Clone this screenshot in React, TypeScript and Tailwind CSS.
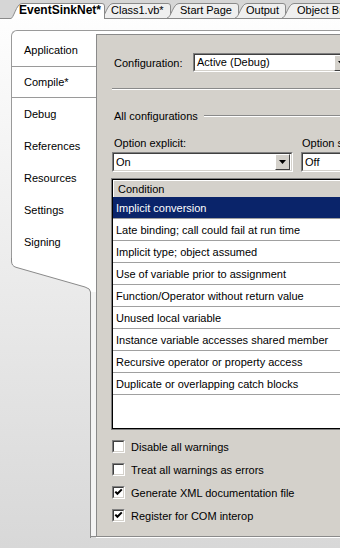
import React from "react";

const conditions = [
  "Implicit conversion",
  "Late binding; call could fail at run time",
  "Implicit type; object assumed",
  "Use of variable prior to assignment",
  "Function/Operator without return value",
  "Unused local variable",
  "Instance variable accesses shared member",
  "Recursive operator or property access",
  "Duplicate or overlapping catch blocks",
];

const pages = ["Application", "Compile*", "Debug", "References", "Resources", "Settings", "Signing"];

const options = [
  { label: "Disable all warnings", checked: false },
  { label: "Treat all warnings as errors", checked: false },
  { label: "Generate XML documentation file", checked: true },
  { label: "Register for COM interop", checked: true },
];

function DocTab({
  label,
  w,
  className,
  active,
}: {
  label: string;
  w: number;
  className: string;
  active?: boolean;
}) {
  const h = active ? 16 : 15;
  return (
    <div
      className={`relative shrink-0 whitespace-nowrap ${active ? "z-10 -mb-px h-[16px] font-bold text-[12px]" : "h-[15px]"} ${className}`}
    >
      <svg className="absolute left-0 top-0" width={w} height={h}>
        <path
          d={`M0,${h} C4,${h} 6,0.5 12,0.5 L${w - 3},0.5 Q${w - 0.5},0.5 ${w - 0.5},3 L${w - 0.5},${h}`}
          fill={active ? "#ffffff" : "#efefef"}
          stroke="#8a8a8a"
        />
      </svg>
      <span className="relative leading-[15px]">{label}</span>
    </div>
  );
}

function DropArrow() {
  return (
    <div className="mr-px flex h-[16px] w-[15px] shrink-0 items-center justify-center border border-t-white border-l-white border-b-[#404040] border-r-[#404040] bg-[#d4d1cb]">
      <svg width="7" height="4" viewBox="0 0 7 4">
        <polygon points="0,0 7,0 3.5,4" fill="#000" />
      </svg>
    </div>
  );
}

function Combo({ value, className }: { value: string; className: string }) {
  return (
    <div className={`flex shrink-0 border border-t-[#808080] border-l-[#808080] border-b-white border-r-white ${className}`}>
      <div className="flex flex-1 items-center border border-t-[#404040] border-l-[#404040] border-b-[#d4d1cb] border-r-[#d4d1cb] bg-white pl-[2px]">
        <span className="flex-1">{value}</span>
        <DropArrow />
      </div>
    </div>
  );
}

function CheckBox({ checked }: { checked: boolean }) {
  return (
    <div className="h-[13px] w-[13px] shrink-0 border border-t-[#808080] border-l-[#808080] border-b-white border-r-white">
      <div className="h-full w-full border border-t-[#404040] border-l-[#404040] border-b-[#d4d1cb] border-r-[#d4d1cb] bg-white">
        {checked && (
          <svg width="9" height="9" viewBox="0 0 9 9" className="block">
            <path d="M1.3 3.6 L3.4 5.8 L7.8 1.4" fill="none" stroke="#000" strokeWidth="2" />
          </svg>
        )}
      </div>
    </div>
  );
}

function Etched({ className }: { className: string }) {
  return <div className={`h-[2px] border-t border-b border-t-[#8a8a8a] border-b-white ${className}`} />;
}

export default function App() {
  return (
    <div className="flex h-[548px] w-[340px] flex-col overflow-hidden bg-linear-to-b from-white to-[#d8d8d8] text-[11px] leading-[13px] text-black [font-family:'Liberation_Sans',Arial,sans-serif]">
      {/* document tabs */}
      <div className="flex h-[19px] shrink-0 items-end border-b border-[#8a8a8a] bg-[#d6d6d6] pl-[10px]">
        <DocTab label="EventSinkNet*" w={95} className="w-[95px] pl-[9px]" active />
        <DocTab label="Class1.vb*" w={70} className="-ml-[4px] w-[70px] pl-[10px]" />
        <DocTab label="Start Page" w={72} className="-ml-[4px] w-[72px] pl-[13px]" />
        <DocTab label="Output" w={51} className="-ml-[4px] w-[51px] pl-[11px]" />
        <DocTab label="Object Browser" w={90} className="-ml-[4px] w-[90px] pl-[15px]" />
      </div>

      <div className="mt-[11px] flex h-[508px] shrink-0 pl-[11px]">
        {/* property page list */}
        <div className="flex w-[85px] shrink-0 flex-col">
          <div className="rounded-tl-[6px] border-l border-t border-[#9a9a9a] bg-white pt-[3px]">
            {pages.map((p) => (
              <div
                key={p}
                className={`flex h-[32px] items-center pl-[12px] pt-px ${p === "Compile*" ? "border-y border-[#9a9a9a]" : ""}`}
              >
                {p}
              </div>
            ))}
          </div>
          <svg width="85" height="34" className="block shrink-0">
            <path d="M0,0 L0.5,3 Q0.5,8 5,9.3 L74,29 Q79.5,30.5 79.5,34 L85,34 L85,0 Z" fill="#ffffff" />
            <path d="M0.5,0 L0.5,3 Q0.5,8 5,9.3 L74,29 Q79.5,30.5 79.5,34" fill="none" stroke="#8a8a8a" />
          </svg>
          <div className="flex flex-1">
            <div className="w-[80px] border-r border-[#8a8a8a]" />
            <div className="mb-px flex-1 border-b border-[#8a8a8a] bg-[#f4f4f4]" />
          </div>
        </div>

        {/* compile page */}
        <div className="flex min-w-0 flex-1 flex-col border-t border-b border-t-[#9a9a9a] border-b-white bg-white pt-[3px]">
          <div className="flex flex-1 flex-col border-l border-t border-b border-[#8a8a8a] bg-[#d4d1cb] pl-[15px] pt-[18px]">
            <div className="flex h-[19px] items-center">
              <span className="w-[81px] shrink-0 pl-[2px] pt-px">Configuration:</span>
              <Combo value="Active (Debug)" className="h-[19px] w-[159px]" />
            </div>

            <Etched className="mt-[16px]" />

            <div className="mt-[19px] flex h-[14px] items-center">
              <span className="pl-[2px]">All configurations</span>
              <Etched className="ml-[6px] flex-1" />
            </div>

            <div className="mt-[13px] flex h-[14px] items-center gap-[8px]">
              <span className="w-[181px] shrink-0 pl-[2px]">Option explicit:</span>
              <span className="shrink-0 whitespace-nowrap pl-px">Option strict:</span>
            </div>
            <div className="mt-[2px] flex gap-[8px]">
              <Combo value="On" className="h-[20px] w-[181px]" />
              <Combo value="Off" className="h-[20px] w-[181px]" />
            </div>

            <div className="-ml-px mt-[6px] w-[260px] shrink-0 border border-[#808080]">
              <div className="h-[250px] border border-black bg-white">
                <div className="flex h-[17px] items-center border-t border-l border-white bg-[#d4d1cb] pl-[4px] pt-px">
                  Condition
                </div>
                {conditions.map((c, i) => (
                  <div
                    key={c}
                    className={`flex h-[22px] items-center whitespace-nowrap border-b border-[#a0a0a0] pl-[3px] pt-px ${
                      i === 0 ? "bg-[#0a246a] text-white" : ""
                    }`}
                  >
                    {c}
                  </div>
                ))}
              </div>
            </div>

            <div className="mt-[5px] flex flex-col">
              {options.map((o) => (
                <div key={o.label} className="flex h-[23px] items-center">
                  <CheckBox checked={o.checked} />
                  <span className="ml-[6px] pt-px">{o.label}</span>
                </div>
              ))}
            </div>
          </div>
        </div>
      </div>
    </div>
  );
}
